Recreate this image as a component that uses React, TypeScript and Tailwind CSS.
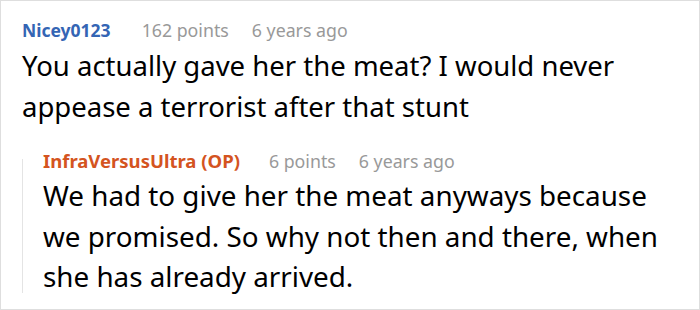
export default function App() {
  return (
    <div className="h-[310px] w-[700px] overflow-hidden border border-[#dedede] bg-white font-['Noto_Sans',sans-serif]">
      <div className="pl-[21px] pr-[25px] pt-[15px]">
        {/* Top comment */}
        <div className="flex items-baseline text-[17.5px] leading-[28px]">
          <span className="font-bold text-[#3465b4]">Nicey0123</span>
          <span className="ml-[31px] text-[17.75px] text-[#999]">162 points</span>
          <span className="ml-[23px] text-[17.75px] text-[#999]">6 years ago</span>
        </div>
        <p className="mt-[2px] text-[27.5px] leading-[40.5px] text-black">
          You actually gave her the meat? I would never appease a terrorist after that stunt
        </p>

        {/* Reply */}
        <div className="mt-[20px] flex">
          <div className="mb-[4px] mt-[12px] w-px shrink-0 bg-[#e4e4e4]" />
          <div className="pl-[20px]">
            <div className="flex items-baseline leading-[28px]">
              <span className="text-[18.5px] font-bold text-[#d4541f]">InfraVersusUltra (OP)</span>
              <span className="ml-[29px] text-[17.75px] text-[#999]">6 points</span>
              <span className="ml-[23px] text-[17.75px] text-[#999]">6 years ago</span>
            </div>
            <p className="text-[27.8px] leading-[40.5px] text-black">
              We had to give her the meat anyways because we promised. So why not then and there, when she has already arrived.
            </p>
          </div>
        </div>
      </div>
    </div>
  );
}
